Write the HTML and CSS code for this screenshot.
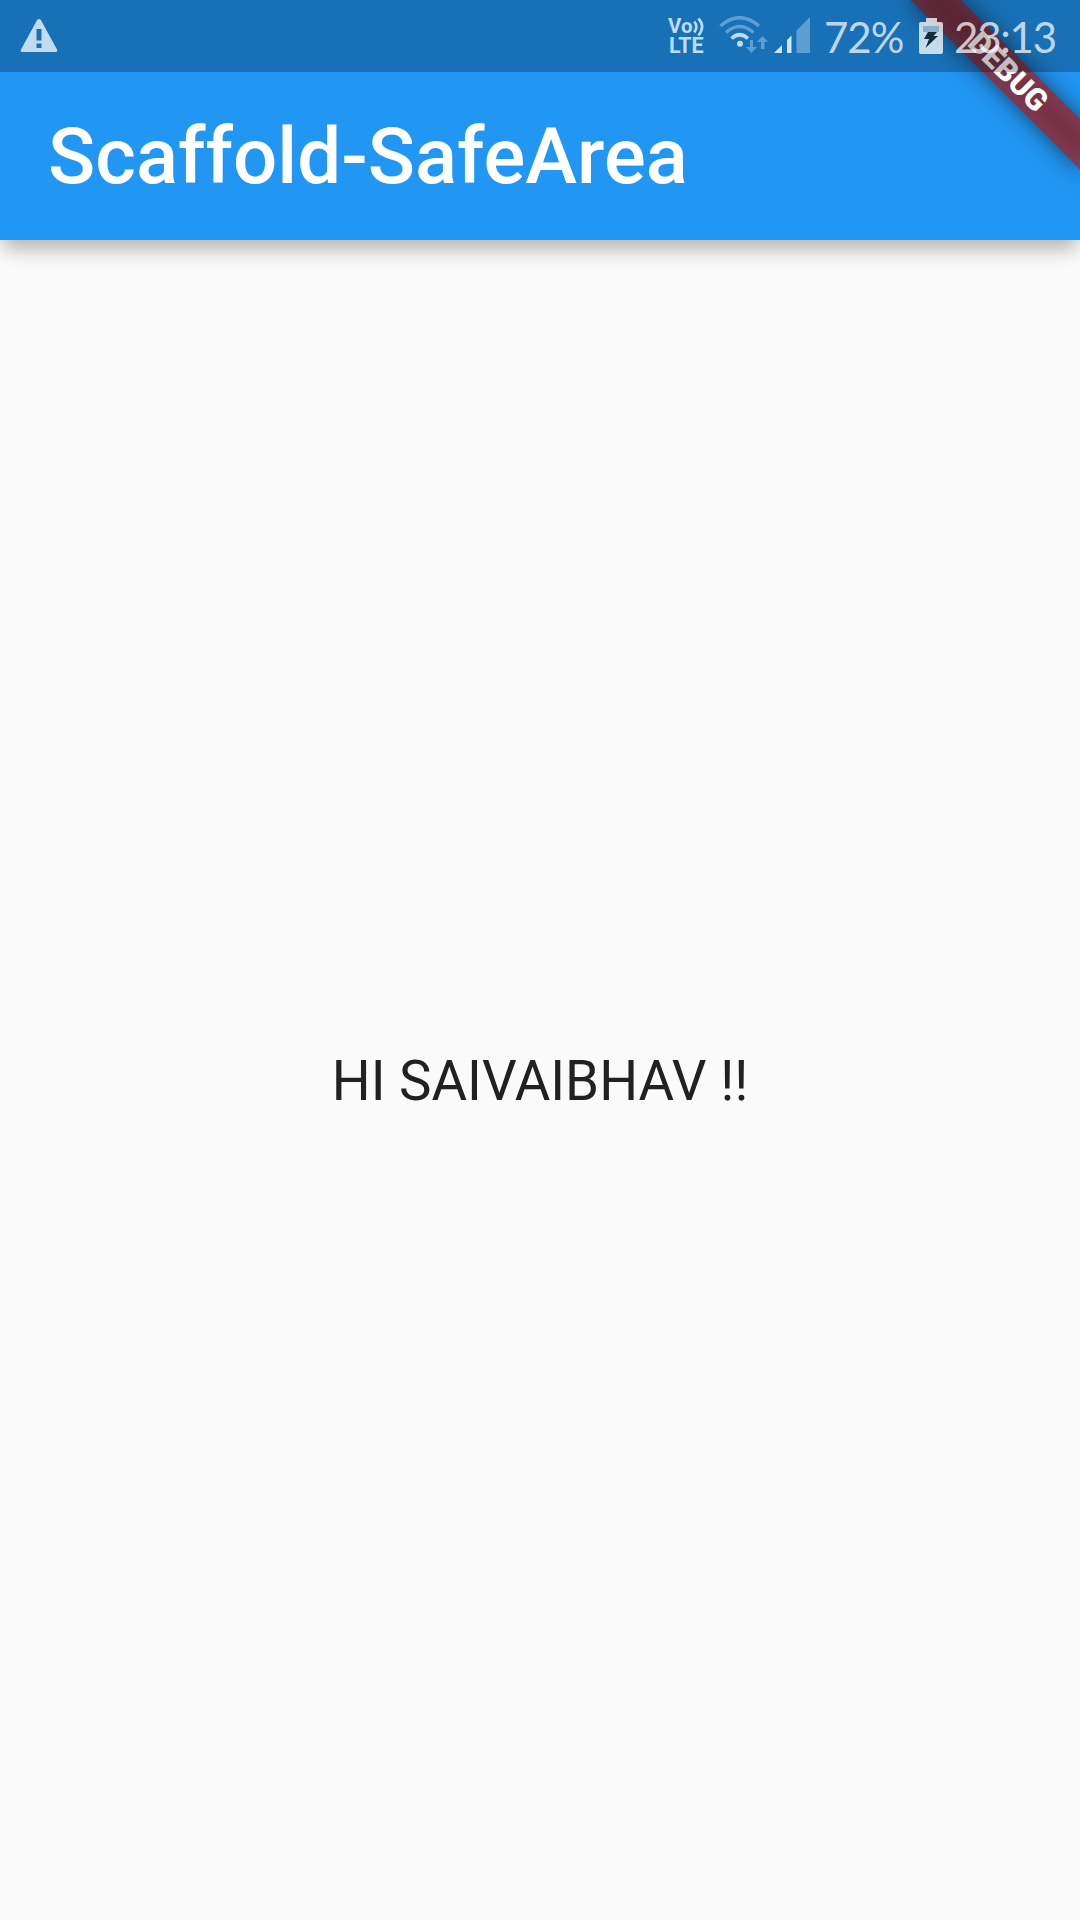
FILE: index.html
```html
<!DOCTYPE html>
<html lang="en">
<head>
<meta charset="utf-8">
<title>Scaffold-SafeArea</title>
<link rel="stylesheet" href="styles.css">
</head>
<body>
<div class="screen">
  <header class="app-bar"><h1 class="title">Scaffold-SafeArea</h1></header>
  <main class="body"><p class="greeting">HI SAIVAIBHAV !!</p></main>
  <div class="banner-layer">
    <div class="banner">
      <div class="banner-shadow"></div>
      <div class="banner-strip">DEBUG</div>
    </div>
  </div>
  <div class="status-bar">
    <svg class="warning" width="38" height="34" viewBox="0 0 38 34">
      <path fill-rule="evenodd" d="M17 1.2Q19 -1 21 1.2L37 30.5Q38 33 35.500 33H2.500Q0 33 1 30.500ZM16.500 10V21.500H21.500V10ZM16.500 24.500V29H21.500V24.500Z"/>
    </svg>
    <div class="volte">
      <div class="volte-top"><span>Vo</span>
        <svg width="11" height="20" viewBox="0 0 11 20"><path d="M1.300 4.500Q5.500 9.500 1.300 15.500M5.300 1.500Q13 9.500 5.300 18.500" fill="none" stroke="#bddcf6" stroke-width="2.600"/></svg>
      </div>
      <div class="volte-bottom">LTE</div>
    </div>
    <svg class="wifi" width="50" height="38" viewBox="0 0 50 38">
      <g fill="none" stroke-width="3.600">
        <path d="M1.500 10Q20.500 -6.500 40 10" stroke="#5e9fd3"/>
        <path d="M7 16.500Q20.500 4.500 34.500 16.500" stroke="#5e9fd3"/>
        <path d="M12.500 22.500Q20.500 15 29 22.500" stroke="#bddcf6"/>
      </g>
      <circle cx="21" cy="27.700" r="3" fill="#bddcf6"/>
      <path d="M31 24H34V31H38L32.500 37L27 31H31ZM42 33H45.500V26H49L43.500 20L38 26H42Z" fill="#5e9fd3"/>
    </svg>
    <svg class="signal" width="36" height="37" viewBox="0 0 36 37">
      <path d="M0 36L8 28V36ZM13 36V23L17.500 18.500V36Z" fill="#cde6fa"/>
      <path d="M22.500 36V13.500L36 0V36Z" fill="#5e9fd3"/>
    </svg>
    <span class="percent">72%</span>
    <svg class="battery" width="24" height="36" viewBox="0 0 24 36">
      <path d="M7 0H18V4H22Q24 4 24 6V34Q24 36 22 36H2Q0 36 0 34V6Q0 4 2 4H7Z" fill="#fff" fill-opacity=".76"/>
      <path d="M4 8H20V14H4Z" fill="#8cb0cb"/>
      <path d="M9 14H18L14.500 18H19L6.500 30L10 21H5Z" fill="#132b3e"/>
    </svg>
    <span class="clock">23:13</span>
  </div>
</div>
</body>
</html>
```
FILE: styles.css
```css
* { box-sizing: border-box; }
body { margin: 0; background: #fafafa; font-family: Roboto, sans-serif; }
.screen { position: relative; width: 1080px; height: 1920px; overflow: hidden; display: flex; flex-direction: column; }
.app-bar { position: relative; flex: none; height: 240px; padding: 74px 48px 0; display: flex; align-items: center; background: #2196f3; box-shadow: 0 12px 18px -3px rgba(0,0,0,.28); }
.title { margin: 0; color: #fff; font-size: 78px; font-weight: 500; line-height: 92px; white-space: nowrap; }
.body { flex: 1; padding-top: 2px; display: flex; align-items: center; justify-content: center; }
.greeting { margin: 0; color: #212121; font-size: 54.6px; line-height: 64px; white-space: nowrap; }
/* corner ribbon, turned about the top right corner of the screen */
.banner-layer { position: absolute; inset: 0; overflow: hidden; }
.banner { position: absolute; left: 960px; top: 84px; width: 240px; height: 36px; transform-origin: 120px -84px; transform: rotate(45deg); }
.banner-shadow { position: absolute; inset: 0; background: rgba(0,0,0,.5); filter: blur(12px); }
.banner-strip { position: relative; height: 36px; background: rgba(183,28,28,.627); color: #fff; font-size: 30.6px; font-weight: 900; line-height: 36px; text-align: center; }
.status-bar { position: absolute; inset: 0 0 auto; height: 72px; padding-left: 20px; display: flex; align-items: flex-start; background: rgba(0,0,0,.25); color: rgba(255,255,255,.74); font-family: Lato, sans-serif; }
.status-bar > * { flex: none; }
.warning { margin-top: 19px; fill: #c3dbef; }
.volte { width: 36px; margin: 17px 0 0 610px; color: #bddcf6; font-family: Roboto, sans-serif; font-weight: 700; }
.volte-top { display: flex; height: 19px; font-size: 20.5px; line-height: 19px; }
.volte-top svg { flex: none; }
.volte-bottom { height: 20px; padding-left: 1px; font-size: 21.5px; line-height: 20px; }
.wifi { margin: 16px 0 0 15px; }
.signal { margin: 17px 0 0 5px; }
.percent { width: 78px; margin: 10px 0 0 14px; font-size: 42px; line-height: 54px; letter-spacing: -1px; }
.battery { margin: 18px 0 0 17px; }
.clock { margin: 10px 0 0 11px; font-size: 42px; line-height: 54px; letter-spacing: -1.2px; white-space: nowrap; }
```
